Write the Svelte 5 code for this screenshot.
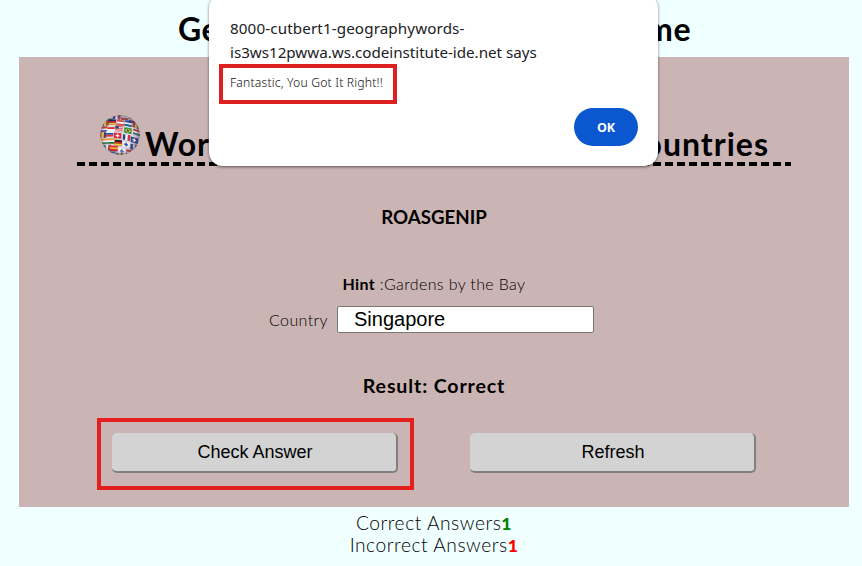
<script>
  let country = $state('Singapore');
  const correct = 1;
  const incorrect = 1;
  // stripes: v = vertical, h = horizontal, x = cross
  const flags = [
    [5, 1, 'h', '#d33', '#fff', '#275'], [12, -1, 'v', '#24a', '#fff', '#c33'], [20, -1, 'h', '#287', '#eee', '#b33'], [28, 1, 'h', '#a33', '#ddd', '#347'],
    [1, 7, 'v', '#275', '#fd4', '#c33'], [8, 5, 'h', '#171c55', '#d22', '#eb3'], [16, 5, 'h', '#c44', '#fff', '#d55'], [24, 5, 'h', '#249', '#fff', '#268'], [32, 6, 'v', '#b33', '#ed4', '#275'],
    [0, 13, 'h', '#c33', '#eee', '#36a'], [7, 11, 'h', '#ddd', '#d33', '#fff'], [15, 11, 's', '#d44', '#fff', '#248'], [24, 12, 'o', '#283', '#fd2', '#239'], [33, 13, 'h', '#c22', '#fff', '#287'],
    [-1, 19, 'v', '#d33', '#fd4', '#246'], [6, 17, 'h', '#f4f4f4', '#24b', '#d33'], [14, 18, 'x', '#db2230', '#fff', '#fff'], [23, 19, 'v', '#22439b', '#fff', '#d33'], [31, 21, 'x', '#223b88', '#eee', '#d55'],
    [1, 25, 'h', '#e93', '#fff', '#387'], [8, 24, 'h', '#f29b38', '#fff', '#287844'], [15, 25, 'h', '#222', '#d22', '#fc2'], [23, 26, 'x', '#eee', '#24a', '#24a'], [31, 28, 'v', '#213d86', '#eee', '#b44'],
    [4, 31, 'v', '#287', '#fff', '#d33'], [11, 31, 'h', '#d22', '#fb2', '#c22'], [19, 33, 'x', '#fff', '#46b', '#46b'], [27, 34, 'h', '#d33', '#eee', '#358'],
    [9, 37, 'h', '#36a', '#eee', '#b44'], [17, 38, 'v', '#386', '#fc4', '#c44']
  ];
</script>

<main>
  <h1><span>Geography</span><span>Game</span></h1>

  <section class="panel">
    <h2>
      <svg class="globe" viewBox="0 0 40 40" width="40" height="40" aria-hidden="true">
        <defs>
          <clipPath id="ball"><circle cx="20" cy="20" r="19.8" /></clipPath>
          <radialGradient id="shade" cx=".48" cy=".5" r=".52">
            <stop offset=".55" stop-color="#fff" stop-opacity="0" />
            <stop offset=".82" stop-color="#546" stop-opacity=".2" />
            <stop offset="1" stop-color="#435" stop-opacity=".65" />
          </radialGradient>
        </defs>
        <g clip-path="url(#ball)">
          <rect width="40" height="40" fill="#d9d5dc" />
          <g transform="rotate(3 20 20)">
            {#each flags as [x, y, kind, a, b, c]}
              <g transform="translate({x} {y}) skewY({(x - 12) * 0.65})">
                <rect width="7.3" height="5.4" fill={a} />
                {#if kind === 'v'}
                  <rect x="2.4" width="2.5" height="5.4" fill={b} />
                  <rect x="4.9" width="2.4" height="5.4" fill={c} />
                {:else if kind === 'h'}
                  <rect y="1.8" width="7.3" height="1.8" fill={b} />
                  <rect y="3.6" width="7.3" height="1.8" fill={c} />
                {:else if kind === 'x'}
                  <path d="M3.6 .8v3.8M1.7 2.7h3.8" stroke={b} stroke-width="1.3" />
                {:else if kind === 'o'}
                  <path d="M3.6 .5 6.8 2.7 3.6 4.9 .5 2.7Z" fill={b} />
                  <circle cx="3.6" cy="2.7" r="1.2" fill={c} />
                {:else}
                  <path d="M0 1.4h7.3M0 3.1h7.3M0 4.8h7.3" stroke={b} stroke-width=".7" />
                  <rect width="3.2" height="2.8" fill={c} />
                {/if}
              </g>
            {/each}
          </g>
          <circle cx="20" cy="20" r="20" fill="url(#shade)" />
        </g>
      </svg>
      <span class="first">World</span><span class="last">Countries</span>
    </h2>
    <div class="dashes"></div>
    <h3 class="scrambled">ROASGENIP</h3>
    <p class="hint"><b>Hint</b> <span>:Gardens by the Bay</span></p>
    <div class="field">
      <label for="country">Country</label>
      <input id="country" bind:value={country} />
    </div>
    <h3 class="result">Result: Correct</h3>
    <div class="actions">
      <div class="marked"><button>Check Answer</button></div>
      <button>Refresh</button>
    </div>
  </section>

  <footer>
    <p class="c1">Correct Answers<b class="good">{correct}</b></p>
    <p class="c2">Incorrect Answers<b class="bad">{incorrect}</b></p>
  </footer>

  <div class="dialog" role="alertdialog">
    <div class="origin"><span class="o1">8000-cutbert1-geographywords-</span><br /><span class="o2">is3ws12pwwa.ws.codeinstitute-ide.net says</span></div>
    <div class="message"><span>Fantastic, You Got It Right!!</span></div>
    <button class="ok">OK</button>
  </div>
</main>

<style>
  :global(body) { margin: 0; background: #f0ffff; }
  * { box-sizing: border-box; }
  main {
    position: relative; width: 862px; height: 566px; overflow: hidden;
    background: #f0ffff; color: #000; font-family: Lato, "Open Sans", sans-serif;
  }
  h1, h2, h3, p { margin: 0; white-space: nowrap; }
  h1 {
    display: flex; justify-content: space-between; height: 57px; letter-spacing: .5px;
    padding: 9px 171px 0 178px; font-size: 32px; line-height: 40px; font-weight: 700;
  }
  .panel { width: 830px; height: 450px; margin-left: 19px; background: #cbb4b4; display: flex; flex-direction: column; }
  h2 { display: flex; height: 105px; padding: 58px 80px 0 81px; font-size: 32px; line-height: 40px; font-weight: 700; letter-spacing: 1px; }
  h2 span { padding-top: 9px; }
  .globe { flex: none; margin-right: 5px; }
  .last { margin-left: auto; }
  .dashes { height: 4px; width: 714px; margin-left: 58px; background: repeating-linear-gradient(90deg, #000 0 8px, transparent 8px 12px); }
  h3 { font-size: 18.7px; line-height: 24px; text-align: center; font-weight: 700; }
  .scrambled { margin-top: 39px; }
  .hint { margin-top: 45px; font-size: 16px; line-height: 20px; text-align: center; font-weight: 300; letter-spacing: .36px; }
  .hint b { font-weight: 700; }
  .field { display: flex; margin-top: 11px; height: 28px; padding-left: 250px; }
  .field label { width: 68px; font-size: 16px; line-height: 20px; padding-top: 5px; font-weight: 300; letter-spacing: .4px; }
  .field input {
    width: 257px; height: 27px; margin-top: 1px; padding: 0 16px; border: 1px solid #767676; border-radius: 2px;
    background: #fff; font: 20px "Liberation Sans", Arial, sans-serif; color: #000; outline: none;
  }
  .result { margin-top: 41px; font-size: 19.6px; letter-spacing: .86px; }
  .actions { display: flex; align-items: flex-start; margin-top: 20px; padding-left: 78px; height: 72px; }
  .marked { width: 317px; height: 72px; border: 4px solid #e51e1e; padding: 11px 0 0 11px; margin-right: 56px; }
  .actions button {
    display: block; width: 286px; height: 40px; padding: 1px 0 0 2px; border: 0 solid #808080; border-width: 0 2px 2px 0;
    border-radius: 5px; background: #d3d3d3;
    font: 18px "Liberation Sans", Arial, sans-serif; color: #000;
  }
  .actions > button { margin-top: 15px; }
  footer { padding-top: 5px; text-align: center; width: 868px; font-size: 19.2px; line-height: 22px; font-weight: 300; letter-spacing: .54px; }
  footer p { height: 22px; }
  footer b { font-weight: 900; font-size: 17.5px; line-height: 1; }
  .good { color: #008000; }
  .bad { color: #f00; }
  .dialog {
    position: absolute; left: 209px; top: -6px; width: 449px; height: 172px; border-radius: 14px; background: #fff;
    box-shadow: 0 1px 3px rgba(0, 0, 0, .55); font-family: "Noto Sans", sans-serif; color: #202124;
    display: flex; flex-direction: column;
  }
  .origin { padding: 22px 0 0 21px; height: 70px; font-size: 15.2px; line-height: 24px; white-space: nowrap; font-weight: 450; }
  .o1 { letter-spacing: .12px; }
  .o2 { letter-spacing: -.02px; }
  .message { width: 178px; height: 40px; margin-left: 10px; border: 4px solid #df2020; padding: 6px 0 0 7px; font-size: 12.2px; line-height: 17px; white-space: nowrap; font-weight: 350; letter-spacing: .17px; color: #111; }
  .ok {
    width: 64px; height: 38px; margin: 4px 0 0 365px; padding: 0; border: 0; border-radius: 19px; background: #0b57d0;
    color: #fff; font: 700 12.5px "Open Sans", sans-serif;
  }
</style>
